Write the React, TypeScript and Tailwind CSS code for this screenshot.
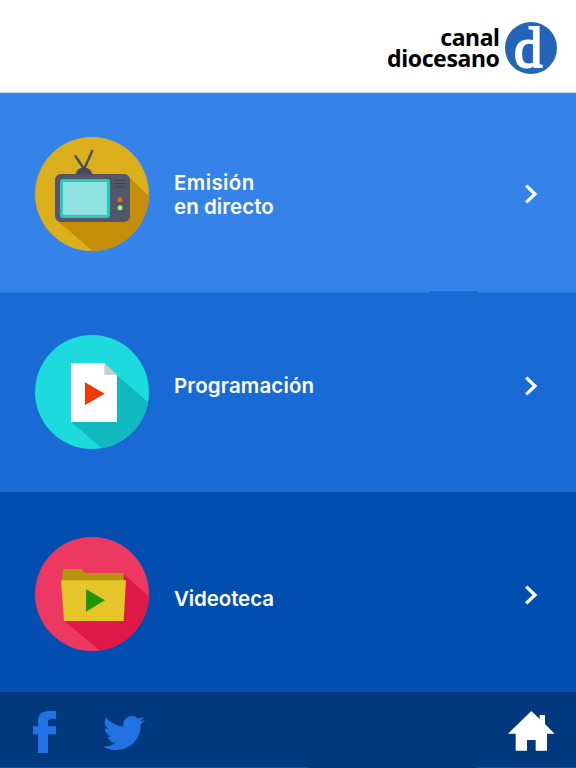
import React from 'react';

interface RowProps {
  className: string;
  icon: React.ReactNode;
  iconClass: string;
  label: React.ReactNode;
  labelClass: string;
  arrowClass: string;
}

function Chevron({ className }: { className: string }) {
  return (
    <svg viewBox="0 0 14 20" className={`h-5 w-3.5 shrink-0 ${className}`}>
      <path d="M2.200 1.600L11 10L2.200 18.400" fill="none" stroke="#fff" strokeWidth="3.300" />
    </svg>
  );
}

function MenuRow({ className, icon, iconClass, label, labelClass, arrowClass }: RowProps) {
  return (
    <a className={`flex items-start pr-[38px] pl-[35px] ${className}`}>
      <div className={`h-[114px] w-[114px] shrink-0 ${iconClass}`}>{icon}</div>
      <div className={`ml-[25px] flex-1 text-[20.500px] leading-6 font-semibold text-white ${labelClass}`}>
        {label}
      </div>
      <Chevron className={arrowClass} />
    </a>
  );
}

function TvIcon() {
  return (
    <svg viewBox="0 0 342 342" className="h-full w-full">
      <clipPath id="tv">
        <circle cx="171" cy="171" r="171" />
      </clipPath>
      <g clipPath="url(#tv)">
        <rect width="342" height="342" fill="#dbaf1c" />
        <path d="M67 251L173 342H342V178L283 121Z" fill="#c48e09" />
      </g>
      <path d="M120 55L147 96M173 39L147 97" stroke="#464b5d" strokeWidth="7" />
      <path d="M122 112C125 85 168 85 172 112Z" fill="#464b5d" />
      <rect x="60" y="111" width="225" height="144" rx="17" fill="#525668" />
      <rect x="75" y="126" width="150" height="117" rx="9" fill="#29c8be" />
      <rect x="84" y="135" width="132" height="99" rx="3" fill="#8ee2df" />
      <path d="M237 130H273M237 139.500H273M237 149H273" stroke="#3f4354" strokeWidth="3" />
      <circle cx="255" cy="188" r="7.500" fill="#ff5a2d" />
      <circle cx="255" cy="212" r="7.500" fill="#a0eb8c" />
    </svg>
  );
}

function DocumentIcon() {
  return (
    <svg viewBox="0 0 342 342" className="h-full w-full">
      <clipPath id="doc">
        <circle cx="171" cy="171" r="171" />
      </clipPath>
      <g clipPath="url(#doc)">
        <rect width="342" height="342" fill="#1ddadc" />
        <path d="M108 261L204 342H342V204L246 121Z" fill="#0fb9bd" />
      </g>
      <path d="M108 84H208L246 121V261H108Z" fill="#fff" />
      <path d="M208 84L246 120H208Z" fill="#c9cccd" />
      <path d="M150 142V210L209 176Z" fill="#f03800" />
    </svg>
  );
}

function FolderIcon() {
  return (
    <svg viewBox="0 0 342 342" className="h-full w-full">
      <clipPath id="folder">
        <circle cx="171" cy="171" r="171" />
      </clipPath>
      <g clipPath="url(#folder)">
        <rect width="342" height="342" fill="#ed3862" />
        <path d="M88 251L196 342H342V178L266 112Z" fill="#df1848" />
      </g>
      <path d="M83 96H140L150 108H266V140H83Z" fill="#b5960d" />
      <path d="M78 130H273L266 252H87Z" fill="#e7c62b" />
      <path d="M153 156V224L210 190Z" fill="#249500" />
    </svg>
  );
}

export default function App() {
  return (
    <div className="flex h-[768px] w-[576px] flex-col overflow-hidden bg-white font-['Inter','Open_Sans',sans-serif]">
      <header className="flex h-[93px] items-start justify-end border-b border-[#c9d3df] pt-[22px] pr-[19.500px]">
        <div className="mt-[4.500px] mr-[5px] text-right font-['Noto_Sans','Open_Sans',sans-serif] text-[23px] leading-[21px] font-bold tracking-[-0.4px] text-black">
          canal
          <br />
          diocesano
        </div>
        <svg viewBox="0 0 52 52" className="h-[52px] w-[52px] overflow-visible">
          <circle cx="26" cy="26" r="26" fill="#2363b9" />
          <text x="9" y="45" fill="#fff" stroke="#fff" strokeWidth="2" fontFamily="Liberation Serif, serif" fontSize="57">
            d
          </text>
        </svg>
      </header>

      <MenuRow
        className="h-[198px] bg-[#3583e8]"
        icon={<TvIcon />}
        iconClass="mt-11"
        label={<><span className="tracking-[0.400px]">Emisión</span><br /><span className="tracking-[0.050px]">en directo</span></>}
        labelClass="mt-[78px]"
        arrowClass="mt-[91px]"
      />
      <div className="flex h-0.5 border-t border-[#3583e8] bg-[#2777dc]">
        <div className="-mt-px ml-[430px] h-0.5 w-12 bg-[#196ad5]" />
      </div>
      <MenuRow
        className="h-[199px] bg-[#196ad5]"
        icon={<DocumentIcon />}
        iconClass="mt-[42px]"
        label={<span className="tracking-[0.150px]">Programación</span>}
        labelClass="mt-[80.500px]"
        arrowClass="mt-[83px]"
      />
      <MenuRow
        className="h-[200px] bg-[#024eb0]"
        icon={<FolderIcon />}
        iconClass="mt-[45.300px]"
        label={<span className="tracking-[-0.100px]">Videoteca</span>}
        labelClass="mt-[95px]"
        arrowClass="mt-[92.500px]"
      />

      <footer className="flex h-[76px] flex-col bg-[#01387e]">
        <div className="flex flex-1 items-start pt-[19px] pr-[21px] pl-[33px]">
          <svg viewBox="0 0 69 126" className="h-[42px] w-[23px]">
            <path d="M15 126V70H0V46H15V31C15 10 27 0 47 0H69V24H55C48 24 45 27 45 34V46H69V70H45V126Z" fill="#2172e2" />
          </svg>
          <svg viewBox="0 0 24 24" className="mt-[1px] ml-[47px] h-[42px] w-[42px]">
            <path d="M23.953 4.570a10 10 0 01-2.825.775 4.958 4.958 0 002.163-2.723c-.951.555-2.005.959-3.127 1.184a4.920 4.920 0 00-8.384 4.482C7.690 8.095 4.067 6.130 1.640 3.162a4.822 4.822 0 00-.666 2.475c0 1.710.870 3.213 2.188 4.096a4.904 4.904 0 01-2.228-.616v.060a4.923 4.923 0 003.946 4.827 4.996 4.996 0 01-2.212.085 4.936 4.936 0 004.604 3.417 9.867 9.867 0 01-6.102 2.105c-.390 0-.779-.023-1.170-.067a13.995 13.995 0 007.557 2.209c9.053 0 13.998-7.496 13.998-13.985 0-.210 0-.420-.015-.630A9.935 9.935 0 0024 4.590z" fill="#2172e2" />
          </svg>
          <svg viewBox="0 0 140 120" className="ml-auto h-10 w-[46.700px]">
            <path d="M0 68L70 0L95 24V12H111V39L140 68H117V119H83V87H57V119H23V68Z" fill="#fff" />
          </svg>
        </div>
        <div className="flex h-px bg-[#0e509f]">
          <div className="ml-[308px] w-[170px] bg-[#01387e]" />
        </div>
      </footer>
    </div>
  );
}
